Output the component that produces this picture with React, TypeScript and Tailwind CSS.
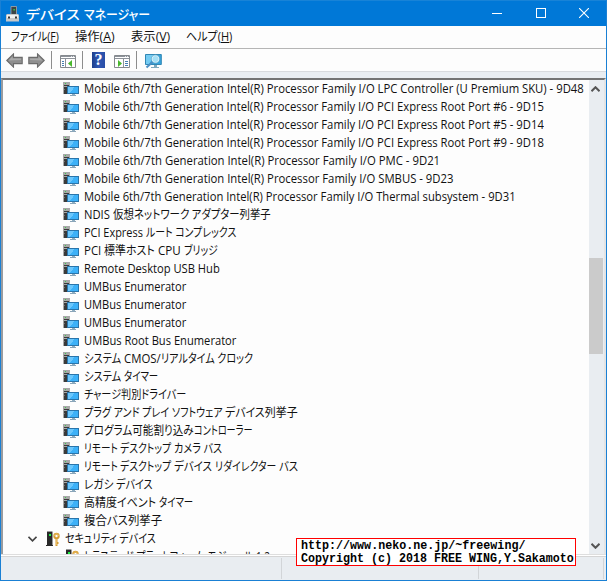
import { useLayoutEffect, useRef, useState } from "react";

type Piece = [string, number];

/** One line of text, condensed or widened to the given width. */
function Fit({ text, width, className = "" }: { text: React.ReactNode; width: number; className?: string }) {
  const ref = useRef<HTMLSpanElement>(null);
  const [scale, setScale] = useState(1);
  useLayoutEffect(() => {
    if (ref.current) setScale(width / ref.current.offsetWidth);
  }, [width]);
  return (
    <span className={`inline-block shrink-0 whitespace-pre ${className}`} style={{ width }}>
      <span ref={ref} className="inline-block origin-left" style={{ transform: `scaleX(${scale})` }}>
        {text}
      </span>
    </span>
  );
}

const P = "Mobile 6th/7th Generation Intel(R) Processor Family I/O ";

const rows: Piece[][] = [
  [[P + "LPC Controller (U Premium SKU) - 9D48", 499.5]],
  [[P + "PCI Express Root Port #6 - 9D15", 460]],
  [[P + "PCI Express Root Port #5 - 9D14", 460]],
  [[P + "PCI Express Root Port #9 - 9D18", 460]],
  [[P + "PMC - 9D21", 356]],
  [[P + "SMBUS - 9D23", 369.5]],
  [[P + "Thermal subsystem - 9D31", 431.5]],
  [["NDIS ", 29], ["仮想ネットワーク", 76], [" アダプター列挙子", 82]],
  [["PCI Express ", 62], ["ルート コンプレックス", 90]],
  [["PCI ", 20], ["標準ホスト", 51], [" CPU ", 29], ["ブリッジ", 34]],
  [["Remote Desktop USB Hub", 136]],
  [["UMBus Enumerator", 102.5]],
  [["UMBus Enumerator", 102.5]],
  [["UMBus Enumerator", 102.5]],
  [["UMBus Root Bus Enumerator", 152.5]],
  [["システム ", 40], ["CMOS/", 37], ["リアルタイム クロック", 92]],
  [["システム ", 40], ["タイマー", 34.5]],
  [["チャージ判別ドライバー", 102]],
  [["プラグ アンド プレイ ", 88], ["ソフトウェア ", 53], ["デバイス列挙子", 73]],
  [["プログラム可能割り込み", 110], ["コントローラー", 58.5]],
  [["リモート ", 36], ["デスクトップ ", 54], ["カメラ バス", 48]],
  [["リモート ", 36], ["デスクトップ ", 54], ["デバイス ", 41], ["リダイレクター ", 64], ["バス", 19]],
  [["レガシ ", 32], ["デバイス", 37]],
  [["高精度イベント ", 75], ["タイマー", 34.5]],
  [["複合バス列挙子", 78]],
];

function DeviceIcon() {
  return (
    <svg className="h-[14px] w-4 shrink-0" viewBox="0 0 16 14" shapeRendering="crispEdges">
      <path fill="#a8a8a8" d="M0 0h7v12H0z" />
      <path fill="#3a3a3a" d="M1 5h3v7H1zM1 3h5v1H1z" />
      <path fill="#6e6e6e" d="M1 7h1v1H1z" />
      <path fill="#41ca4e" d="M2 1h1v1H2z" />
      <path fill="#2a75ab" d="M4 4h12v8H4z" />
      <path fill="#3db1f8" d="M5 5h10v6H5z" />
      <path fill="#6cc7fc" d="M5 5h6v1h-1v2H9v1H8v1H7v1H5z" />
      <path fill="#8fb0c4" d="M9 12h3v1H9z" />
      <path fill="#8ba5b8" d="M7 13h6v1H7z" />
    </svg>
  );
}

function KeyDevice() {
  return (
    <svg className="h-4 w-[15px] shrink-0" viewBox="0 0 15 16">
      <path fill="#999" d="M1 0h5l1 1v13H1z" />
      <path fill="#292929" d="M1 1h5v13h1v1H0v-1h1z" />
      <path fill="#20ed43" d="M3 3h2v2H3z" />
      <circle cx="10.5" cy="5" r="2.2" fill="none" stroke="#d59b32" strokeWidth="2" />
      <path stroke="#d59b32" strokeWidth="2" d="M10.5 7v8M11 12h1.5" />
      <path stroke="#f1c773" strokeWidth=".7" d="M8.5 5c0-3 4-3 4 0M10.5 8v6" fill="none" />
    </svg>
  );
}

function Arrow({ right = false }: { right?: boolean }) {
  return (
    <svg className={`h-[15px] w-[17px] ${right ? "-scale-x-100" : ""}`} viewBox="0 0 17 15">
      <path d="M.8 7.5 7.5.9v3.5h8.7v6.2H7.5v3.5z" fill="#8e8e8e" stroke="#6b6b6b" strokeWidth="1.1" />
      <path d="M2.5 7.5 6.5 3.6v2h8.4v1.5z" fill="#aaa" />
    </svg>
  );
}

function PanelIcon({ right = false }: { right?: boolean }) {
  return (
    <svg className="h-[13px] w-4" viewBox="0 0 16 13">
      <path fill="#fff" stroke="#85898e" d="M.5.5h15v12H.5z" />
      <path fill="#8d9299" d="M1 1h14v1H1zM1 3h14v1H1z" />
      <path fill="#dce1e7" d="M11 1h1v1h-1zM13 1h1v1h-1z" />
      {right ? (
        <>
          <path stroke="#8c9299" d="M9.5 4v8" />
          <path stroke="#467fb3" d="M11 6.5h3M11 8.5h3M11 10.5h3" />
          <path fill="#49b72d" d="m4 5 4 3.5L4 12z" />
        </>
      ) : (
        <>
          <path stroke="#8c9299" d="M5.5 4v8" />
          <path stroke="#467fb3" d="M2 6.5h2M2 8.5h2M2 10.5h2" />
          <path fill="#49b72d" d="m12 5-4 3.5 4 3.5z" />
        </>
      )}
    </svg>
  );
}

function Monitor() {
  return (
    <svg className="h-4 w-[17px]" viewBox="0 0 17 16">
      <path fill="#38a4dc" stroke="#3187b4" d="M.5 1.5h15.8v10H.5z" />
      <path fill="#74cbf2" d="M1 2h9L4 11H1z" />
      <path fill="#7ea9bd" d="M9 12h3v2h2v1H6v-1h3z" />
      <path stroke="#4b8fc4" strokeWidth="2" d="M7.8 8.8 1.5 14.5" />
      <circle cx="10.5" cy="6" r="3.6" fill="#a5dff5" stroke="#dff4fc" />
      <circle cx="10.5" cy="6" r="4.2" fill="none" stroke="#5a9dbb" strokeWidth=".5" />
    </svg>
  );
}

function Separator() {
  return <i className="h-[18px] w-px bg-[#8d8d8d]" />;
}

export default function App() {
  return (
    <div className="flex h-[581px] w-[607px] flex-col overflow-hidden border-x border-b border-[#1a80d4] bg-[#fdfdfd] font-['Open_Sans','Noto_Sans_CJK_JP',sans-serif] text-[12px] leading-[18px] text-[#111] [font-feature-settings:'palt']">
      <header className="flex h-[26px] shrink-0 items-center border-t border-[#1883d7] bg-[#0078d7] pl-[5px] text-white">
        <svg className="mr-[7px] h-4 w-[13px]" viewBox="0 0 13 16">
          <path fill="#3e4447" stroke="#a3a9ad" strokeWidth=".8" d="M5 .5h5.5V9H5z" />
          <path fill="#30ea45" d="M7.5 3h1.3v1.5H7.5z" />
          <path fill="#c7c8c9" d="M1 8h11l1 1v6.5H0V9z" />
          <path fill="#f1f1f1" d="M1 9h11v3H1z" />
          <path fill="#383838" d="M2 10.5h2v2H2zM9 10.5h2v2H9z" />
        </svg>
        <Fit text="デバイス " width={58} className="text-[13px] font-medium" />
        <Fit text="マネージャー" width={66} className="text-[13px] font-medium" />
        <div className="ml-auto flex items-center gap-[33.5px] pr-[17px] pb-px">
          <i className="h-px w-2.5 bg-white" />
          <i className="h-2.5 w-2.5 border border-white" />
          <svg className="h-2.5 w-2.5" viewBox="0 0 10 10">
            <path stroke="#fff" strokeWidth="1.1" d="m0 0 10 10M10 0 0 10" />
          </svg>
        </div>
      </header>

      <nav className="flex h-[23px] shrink-0 items-center border-b border-[#b5b5b5] pl-[10px]">
        <Fit text={<>ファイル(<u>F</u>)</>} width={48} />
        <Fit className="ml-4" text={<>操作(<u>A</u>)</>} width={40} />
        <Fit className="ml-4" text={<>表示(<u>V</u>)</>} width={39} />
        <Fit className="ml-4" text={<>ヘルプ(<u>H</u>)</>} width={46} />
      </nav>

      <div className="flex h-[23px] shrink-0 items-center border-b border-[#d8dadd] pl-[5px]">
        <span className="flex pt-px"><Arrow /></span>
        <span className="ml-[5px] flex pt-px"><Arrow right /></span>
        <span className="ml-1.5 flex"><Separator /></span>
        <span className="ml-2 flex pt-[3px]"><PanelIcon /></span>
        <span className="ml-1.5 flex"><Separator /></span>
        <span className="ml-[9px] flex h-4 w-[13px] items-center justify-center bg-linear-to-r from-[#1d3f8c] via-[#3158b4] to-[#284da6] font-['Liberation_Serif'] text-[16px] font-bold text-white">?</span>
        <span className="ml-[9px] flex pt-[3px]"><PanelIcon right /></span>
        <span className="ml-1.5 flex"><Separator /></span>
        <span className="ml-2 flex pt-px"><Monitor /></span>
      </div>

      <div className="h-[6px] shrink-0 bg-[#e9edf1]" />

      <main className="flex h-[476px] shrink-0 border-t-2 border-r-2 border-l-2 border-t-[#737373] border-r-[#e4e4e4] border-l-[#999ca0]">
        <ul className="min-w-0 flex-1 overflow-hidden">
          {rows.map((row, index) => (
            <li key={index} className="flex h-[18px] items-center pl-[60px]">
              <DeviceIcon />
              <span className="ml-[5px] flex">
                {row.map(([text, width], part) => <Fit key={part} text={text} width={width} />)}
              </span>
            </li>
          ))}
          <li className="flex h-[18px] items-center pl-[25px]">
            <svg className="mr-[9px] h-[6px] w-[9px]" viewBox="0 0 9 6">
              <path fill="none" stroke="#444" strokeWidth="1.6" d="m.5.8 4 4 4-4" />
            </svg>
            <KeyDevice />
            <Fit className="ml-1" text="セキュリティ デバイス" width={91} />
          </li>
          <li className="flex h-[18px] items-center pl-[62px]">
            <KeyDevice />
            <Fit className="ml-1" text="トラステッド プラットフォーム モジュール 1.2" width={186} />
          </li>
        </ul>
        <div className="flex w-[15px] flex-col items-start bg-[#e9edf1]">
          <svg className="mt-[6px] ml-[2px] h-[6px] w-[9px] shrink-0" viewBox="0 0 9 6">
            <path fill="none" stroke="#555" strokeWidth="2" d="m.5 5.2 4-4 4 4" />
          </svg>
          <i className="mt-[166px] h-24 w-[14px] shrink-0 bg-[#cbcbcb]" />
          <svg className="mt-auto mb-[5px] ml-[2px] h-[6px] w-[9px] shrink-0" viewBox="0 0 9 6">
            <path fill="none" stroke="#555" strokeWidth="2" d="m.5.8 4 4 4-4" />
          </svg>
        </div>
      </main>

      <footer className="relative flex min-h-0 flex-1 flex-col bg-[#e9edf1]">
        <div className="h-[3px] border-y border-t-[#dedede] border-b-[#d5d5d5] bg-white" />
        <div className="flex flex-1 py-px">
          <i className="w-[281px] border-r border-[#d2d5d8]" />
          <i className="w-[197px] border-r border-[#d2d5d8]" />
          <i className="w-[125px] border-r border-[#d2d5d8]" />
        </div>
        <div className="absolute top-[-16px] left-[295px] flex h-7 w-[280px] flex-col border border-[#f00] bg-white pt-px pl-1 font-['Liberation_Mono','DejaVu_Sans_Mono',monospace] text-[12px] leading-[13px] font-bold text-black">
          <Fit text="http://www.neko.ne.jp/~freewing/" width={224} />
          <Fit text="Copyright (c) 2018 FREE WING,Y.Sakamoto" width={273} />
        </div>
      </footer>
    </div>
  );
}
